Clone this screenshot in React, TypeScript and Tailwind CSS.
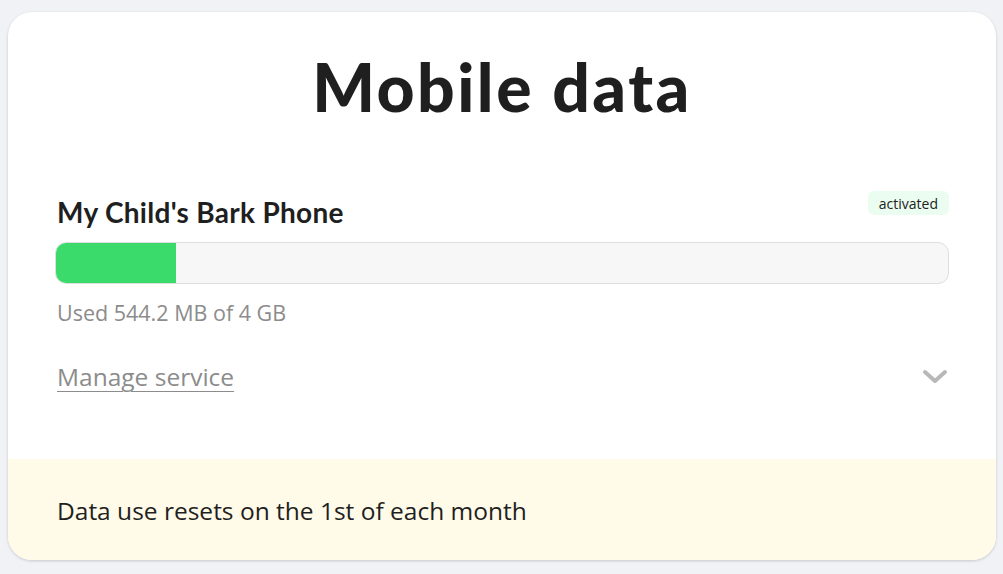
import React from "react";

export default function App() {
  return (
    <div className="w-[1003px] h-[574px] bg-[#f1f2f6] pt-[12px] pl-[8px] pr-[7px]" style={{ fontFamily: '"Open Sans", "Noto Sans", sans-serif' }}>
      <div className="w-[988px] h-[548px] bg-white rounded-[24px] shadow-[0_1px_3px_rgba(0,0,0,0.18)] overflow-hidden flex flex-col">
        <div className="flex-1 px-[47px]">
          <h1 className="text-center text-[#1f1f1f] font-black text-[66px] leading-none mt-[42px] tracking-[2.5px]" style={{ fontFamily: 'Lato, sans-serif' }}>
            Mobile data
          </h1>
          <div className="mt-[71px] flex items-end justify-between">
            <div className="ml-[2px] text-[28px] font-bold text-[#1f1f1f] leading-none tracking-[0.3px]" style={{ fontFamily: 'Lato, sans-serif' }}>My Child's Bark Phone</div>
            <div className="bg-[#ebfdf0] rounded-[6px] px-[11px] h-[24px] flex items-center text-[14px] text-[#222] mb-[11px]">activated</div>
          </div>
          <div className="mt-[16px] h-[42px] rounded-[11px] border border-[#dedede] bg-[#f7f7f7] overflow-hidden">
            <div className="h-full w-[120px] bg-[#3adb6b]" />
          </div>
          <div className="ml-[2px] mt-[14px] text-[21.5px] text-[#8c8c8c] leading-[30px]">Used 544.2 MB of 4 GB</div>
          <div className="mt-[32px] flex items-center justify-between">
            <span className="ml-[2px] text-[24.5px] text-[#8c8c8c] underline underline-offset-[5px] decoration-[1px] leading-[34px]">Manage service</span>
            <svg width="26" height="16" viewBox="0 0 26 16" className="mr-[1px]">
              <path d="M3 3 L13 12 L23 3" fill="none" stroke="#b8b8b8" strokeWidth="4" strokeLinecap="round" strokeLinejoin="round" />
            </svg>
          </div>
        </div>
        <div className="h-[101px] bg-[#fffbe8] px-[49px] flex items-center">
          <span className="text-[24.5px] text-[#1f1f1f] mt-[3px]">Data use resets on the 1st of each month</span>
        </div>
      </div>
    </div>
  );
}
